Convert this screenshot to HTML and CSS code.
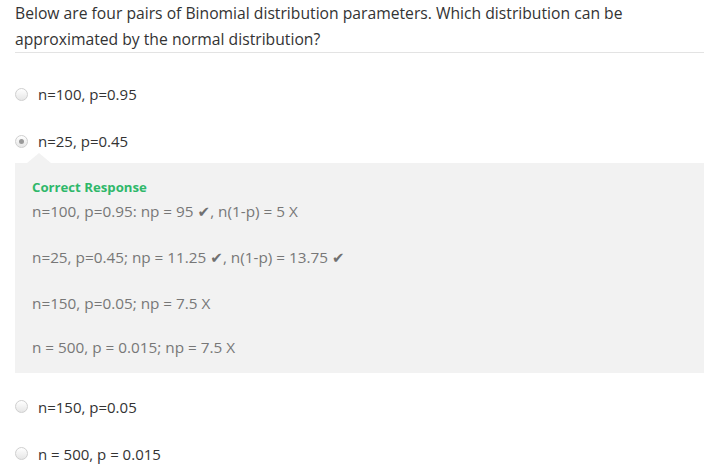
FILE: index.html
```html
<!DOCTYPE html>
<html>
<head>
<meta charset="utf-8">
<link rel="stylesheet" href="styles.css">
</head>
<body>
<div class="question">
  <div class="prompt">Below are four pairs of Binomial distribution parameters. Which distribution can be approximated by the normal distribution?</div>
  <div class="options">
    <div class="option first"><span class="radio"></span><span class="label">n=100, p=0.95</span></div>
    <div class="option"><span class="radio checked"></span><span class="label">n=25, p=0.45</span></div>
    <div class="feedback">
      <div class="feedback-title">Correct Response</div>
      <div class="feedback-body">n=100, p=0.95: np = 95 <span class="check">✔</span>, n(1-p) = 5 X<br><br>n=25, p=0.45; np = 11.25 <span class="check">✔</span>, n(1-p) = 13.75 <span class="check">✔</span><br><br>n=150, p=0.05; np = 7.5 X<br><br>n = 500, p = 0.015; np = 7.5 X</div>
    </div>
    <div class="option after-feedback"><span class="radio"></span><span class="label">n=150, p=0.05</span></div>
    <div class="option last"><span class="radio"></span><span class="label">n = 500, p = 0.015</span></div>
  </div>
</div>
</body>
</html>
```

FILE: styles.css
```css
html, body {
  margin: 0;
  padding: 0;
  background: #ffffff;
}
body {
  font-family: "Open Sans", "Liberation Sans", sans-serif;
  color: #333333;
}
.question {
  padding: 0 13px 0 15px;
}
.prompt {
  font-size: 15.7px;
  line-height: 26px;
  color: #333333;
  border-bottom: 1px solid #e3e3e3;
}
.options {
  display: flex;
  flex-direction: column;
}
.option {
  display: flex;
  align-items: center;
  height: 20px;
  margin-top: 27px;
}
.option.first {
  margin-top: 31px;
}
.option.after-feedback {
  margin-top: 24px;
}
.option.last {
  margin-top: 27px;
}
.radio {
  width: 11px;
  height: 11px;
  border-radius: 50%;
  border: 1px solid #cfcfcf;
  background: linear-gradient(#ffffff, #e6e6e6);
  margin-right: 10px;
  display: flex;
  align-items: center;
  justify-content: center;
  flex: none;
}
.radio.checked::after {
  content: "";
  width: 5px;
  height: 5px;
  border-radius: 50%;
  background: #9a9a9a;
}
.label {
  font-size: 15px;
  line-height: 20px;
  color: #333333;
}
.feedback {
  position: relative;
  margin-top: 12px;
  background: #f2f2f2;
  padding: 14px 17px 14px 17px;
}
.feedback::before {
  content: "";
  position: absolute;
  top: -10px;
  left: 12px;
  width: 0;
  height: 0;
  border-left: 12px solid transparent;
  border-right: 12px solid transparent;
  border-bottom: 10px solid #f2f2f2;
}
.feedback-title {
  font-size: 13.2px;
  font-weight: 700;
  line-height: 20px;
  color: #2fb86a;
  margin-bottom: 3px;
}
.feedback-body {
  font-size: 15.3px;
  line-height: 22.4px;
  color: #777777;
}
.check {
  font-family: "DejaVu Sans", sans-serif;
  font-size: 15px;
  color: #707070;
}
```
